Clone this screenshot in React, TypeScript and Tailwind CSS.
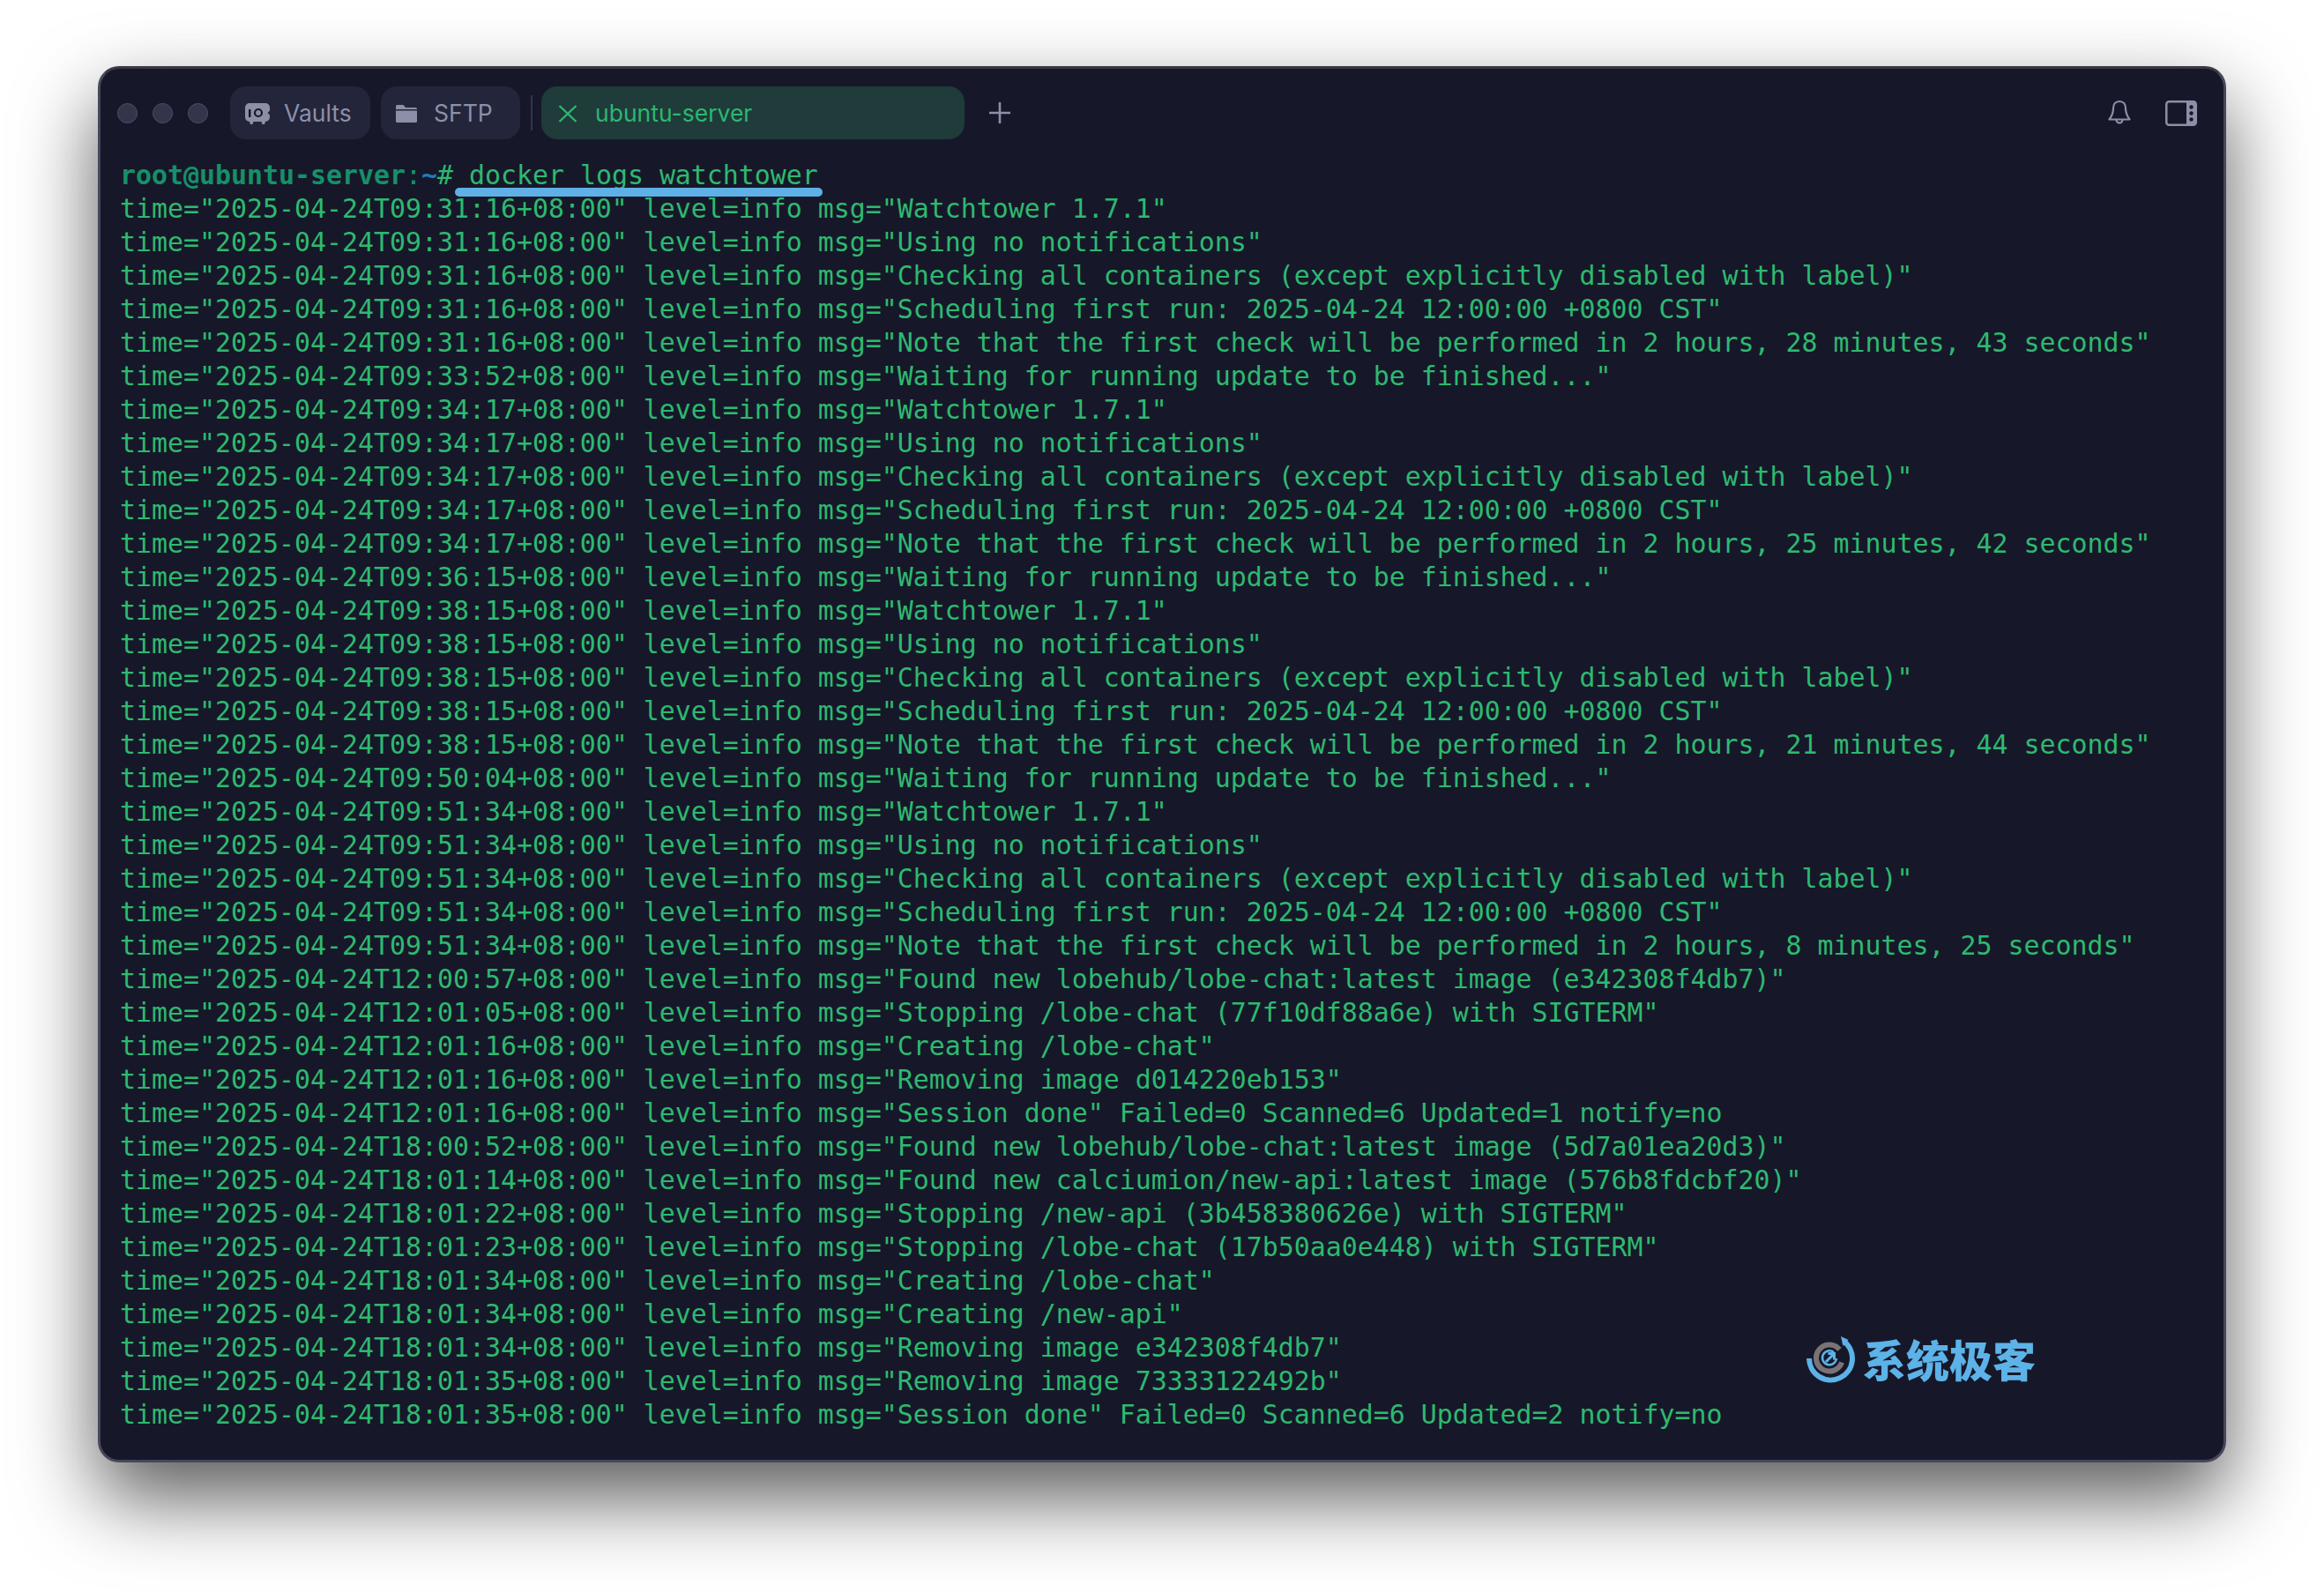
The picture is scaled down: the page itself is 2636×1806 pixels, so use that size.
const logs: string[] = [
  'time="2025-04-24T09:31:16+08:00" level=info msg="Watchtower 1.7.1"',
  'time="2025-04-24T09:31:16+08:00" level=info msg="Using no notifications"',
  'time="2025-04-24T09:31:16+08:00" level=info msg="Checking all containers (except explicitly disabled with label)"',
  'time="2025-04-24T09:31:16+08:00" level=info msg="Scheduling first run: 2025-04-24 12:00:00 +0800 CST"',
  'time="2025-04-24T09:31:16+08:00" level=info msg="Note that the first check will be performed in 2 hours, 28 minutes, 43 seconds"',
  'time="2025-04-24T09:33:52+08:00" level=info msg="Waiting for running update to be finished..."',
  'time="2025-04-24T09:34:17+08:00" level=info msg="Watchtower 1.7.1"',
  'time="2025-04-24T09:34:17+08:00" level=info msg="Using no notifications"',
  'time="2025-04-24T09:34:17+08:00" level=info msg="Checking all containers (except explicitly disabled with label)"',
  'time="2025-04-24T09:34:17+08:00" level=info msg="Scheduling first run: 2025-04-24 12:00:00 +0800 CST"',
  'time="2025-04-24T09:34:17+08:00" level=info msg="Note that the first check will be performed in 2 hours, 25 minutes, 42 seconds"',
  'time="2025-04-24T09:36:15+08:00" level=info msg="Waiting for running update to be finished..."',
  'time="2025-04-24T09:38:15+08:00" level=info msg="Watchtower 1.7.1"',
  'time="2025-04-24T09:38:15+08:00" level=info msg="Using no notifications"',
  'time="2025-04-24T09:38:15+08:00" level=info msg="Checking all containers (except explicitly disabled with label)"',
  'time="2025-04-24T09:38:15+08:00" level=info msg="Scheduling first run: 2025-04-24 12:00:00 +0800 CST"',
  'time="2025-04-24T09:38:15+08:00" level=info msg="Note that the first check will be performed in 2 hours, 21 minutes, 44 seconds"',
  'time="2025-04-24T09:50:04+08:00" level=info msg="Waiting for running update to be finished..."',
  'time="2025-04-24T09:51:34+08:00" level=info msg="Watchtower 1.7.1"',
  'time="2025-04-24T09:51:34+08:00" level=info msg="Using no notifications"',
  'time="2025-04-24T09:51:34+08:00" level=info msg="Checking all containers (except explicitly disabled with label)"',
  'time="2025-04-24T09:51:34+08:00" level=info msg="Scheduling first run: 2025-04-24 12:00:00 +0800 CST"',
  'time="2025-04-24T09:51:34+08:00" level=info msg="Note that the first check will be performed in 2 hours, 8 minutes, 25 seconds"',
  'time="2025-04-24T12:00:57+08:00" level=info msg="Found new lobehub/lobe-chat:latest image (e342308f4db7)"',
  'time="2025-04-24T12:01:05+08:00" level=info msg="Stopping /lobe-chat (77f10df88a6e) with SIGTERM"',
  'time="2025-04-24T12:01:16+08:00" level=info msg="Creating /lobe-chat"',
  'time="2025-04-24T12:01:16+08:00" level=info msg="Removing image d014220eb153"',
  'time="2025-04-24T12:01:16+08:00" level=info msg="Session done" Failed=0 Scanned=6 Updated=1 notify=no',
  'time="2025-04-24T18:00:52+08:00" level=info msg="Found new lobehub/lobe-chat:latest image (5d7a01ea20d3)"',
  'time="2025-04-24T18:01:14+08:00" level=info msg="Found new calciumion/new-api:latest image (576b8fdcbf20)"',
  'time="2025-04-24T18:01:22+08:00" level=info msg="Stopping /new-api (3b458380626e) with SIGTERM"',
  'time="2025-04-24T18:01:23+08:00" level=info msg="Stopping /lobe-chat (17b50aa0e448) with SIGTERM"',
  'time="2025-04-24T18:01:34+08:00" level=info msg="Creating /lobe-chat"',
  'time="2025-04-24T18:01:34+08:00" level=info msg="Creating /new-api"',
  'time="2025-04-24T18:01:34+08:00" level=info msg="Removing image e342308f4db7"',
  'time="2025-04-24T18:01:35+08:00" level=info msg="Removing image 73333122492b"',
  'time="2025-04-24T18:01:35+08:00" level=info msg="Session done" Failed=0 Scanned=6 Updated=2 notify=no',
];

function VaultIcon() {
  return (
    <svg width="28" height="24" viewBox="0 0 28 24" className="shrink-0">
      <path d="M5 0h18a5 5 0 0 1 5 5v3.500l-2.500 2.500 2.500 2.500V16a5 5 0 0 1-5 5l-1 3h-2.500l-1-3h-9l-1 3H6l-1-3a5 5 0 0 1-5-5V5a5 5 0 0 1 5-5z" fill="#8d8fa8" />
      <rect x="4" y="7" width="2.500" height="9" fill="#161829" />
      <circle cx="15" cy="11" r="4" fill="none" stroke="#161829" strokeWidth="2.200" />
    </svg>
  );
}

function FolderIcon() {
  return (
    <svg width="24" height="20" viewBox="0 0 24 20" className="shrink-0">
      <path d="M0 1.500A1.500 1.500 0 0 1 1.500 0h7l2.500 3h11.500A1.500 1.500 0 0 1 24 4.500V5H0z" fill="#8d8fa8" />
      <path d="M0 6.500h24v12a1.500 1.500 0 0 1-1.500 1.500h-21A1.500 1.500 0 0 1 0 18.500z" fill="#8d8fa8" />
    </svg>
  );
}

function BellIcon() {
  return (
    <svg width="26" height="30" viewBox="0 0 26 30" fill="none" stroke="#8d8fa8" strokeWidth="2.200" strokeLinejoin="round">
      <path d="M13 2c-4.500 0-7 3.500-7 8 0 5-2 9-4.500 12.500h23C22 19 20 15 20 10c0-4.500-2.500-8-7-8z" />
      <path d="M9.500 23a3.500 3.500 0 0 0 7 0" />
    </svg>
  );
}

function PanelIcon() {
  return (
    <svg width="36" height="29" viewBox="0 0 36 29">
      <rect x="1.250" y="1.250" width="33.500" height="26.500" rx="3" fill="none" stroke="#8d8fa8" strokeWidth="2.500" />
      <path d="M24 1h8a3 3 0 0 1 3 3v21a3 3 0 0 1-3 3h-8z" fill="#8d8fa8" />
      <circle cx="29.500" cy="7.500" r="2.200" fill="#161829" />
      <circle cx="29.500" cy="14.500" r="2.200" fill="#161829" />
      <circle cx="29.500" cy="21.500" r="2.200" fill="#161829" />
    </svg>
  );
}

function WatermarkLogo() {
  return (
    <svg width="60" height="54" viewBox="0 0 60 54" fill="none" className="mt-[3px] shrink-0">
      <path d="M5 26A24.500 24.500 0 1 0 44.200 6.400" stroke="#5db2e8" strokeWidth="6" />
      <path d="M41 1l2.500 11 6-7z" fill="#5db2e8" />
      <path d="M39.500 15.900A15 15 0 1 0 42.100 30.600" stroke="#7a7375" strokeWidth="6" />
      <path d="M33 19a8 8 0 1 0 3 7" stroke="#5db2e8" strokeWidth="2.500" />
      <path d="M24 30l9-9M26.500 20.500h7v7" stroke="#5db2e8" strokeWidth="3" />
    </svg>
  );
}

export default function App() {
  return (
    <div className="h-[1806px] overflow-hidden bg-white px-[111px] pt-[75px]">
      <div className="relative h-[1584px] rounded-[24px] border-[3px] border-[#46475a] border-t-[#3a3a44] bg-[#161829] shadow-[0_40px_90px_rgba(0,0,0,0.65)]">
        <div className="mt-[20px] flex h-[60px] items-center pl-[19px] pr-[30px] font-['Inter',sans-serif]">
          <div className="flex gap-[17px]">
            <span className="h-[23px] w-[23px] rounded-full border border-[#4d4f63] bg-[#33354a]" />
            <span className="h-[23px] w-[23px] rounded-full border border-[#4d4f63] bg-[#33354a]" />
            <span className="h-[23px] w-[23px] rounded-full border border-[#4d4f63] bg-[#33354a]" />
          </div>
          <div className="ml-[25px] flex h-full w-[159px] items-center gap-[16px] rounded-[18px] bg-[#23253a] pl-[17px] pt-[1px] text-[26.500px] text-[#8d8fa8]">
            <VaultIcon />
            <span>Vaults</span>
          </div>
          <div className="ml-[12px] flex h-full w-[158px] items-center gap-[19px] rounded-[18px] bg-[#23253a] pl-[17px] pt-[1px] text-[26.500px] text-[#8d8fa8]">
            <FolderIcon />
            <span>SFTP</span>
          </div>
          <div className="ml-[12px] h-[40px] w-[2px] bg-[#33354a]" />
          <div className="ml-[10px] flex h-full w-[480px] items-center gap-[20px] rounded-[18px] bg-[#1f3b3a] pl-[19px] pt-[1px] text-[26.500px] text-[#2bb870]">
            <svg width="22" height="20" viewBox="0 0 22 20" fill="none" stroke="#2bb870" strokeWidth="2.400" className="shrink-0">
              <path d="M1.500 1l19 18M20.500 1l-19 18" />
            </svg>
            <span>ubuntu-server</span>
          </div>
          <svg width="24" height="24" viewBox="0 0 24 24" fill="none" stroke="#8d8fa8" strokeWidth="2.600" className="ml-[28px]">
            <path d="M12 0v24M0 12h24" />
          </svg>
          <div className="ml-auto flex items-center gap-[39px]">
            <BellIcon />
            <PanelIcon />
          </div>
        </div>

        <div className="mt-[22px] whitespace-pre pl-[22px] font-['DejaVu_Sans_Mono',monospace] text-[29.900px] leading-[38px] text-[#2eb970]">
          <div className="relative">
            <span className="font-bold text-[#16906a]">root@ubuntu-server</span>
            <span className="text-[#16906a]">:</span>
            <span className="font-bold text-[#1f7cc0]">~</span>
            <span># docker logs watchtower</span>
            <div className="absolute left-[380px] top-[33px] h-[10px] w-[417px] rounded-full bg-[#5fb0e6]" />
          </div>
          {logs.map((line, i) => (
            <div key={i}>{line}</div>
          ))}
        </div>

        <div className="absolute left-[1933px] top-[1434px] flex items-center gap-[6px] font-['Noto_Sans_CJK_SC',sans-serif] text-[49px] font-black leading-none text-[#5db2e8]">
          <WatermarkLogo />
          <span>系统极客</span>
        </div>
      </div>
    </div>
  );
}
